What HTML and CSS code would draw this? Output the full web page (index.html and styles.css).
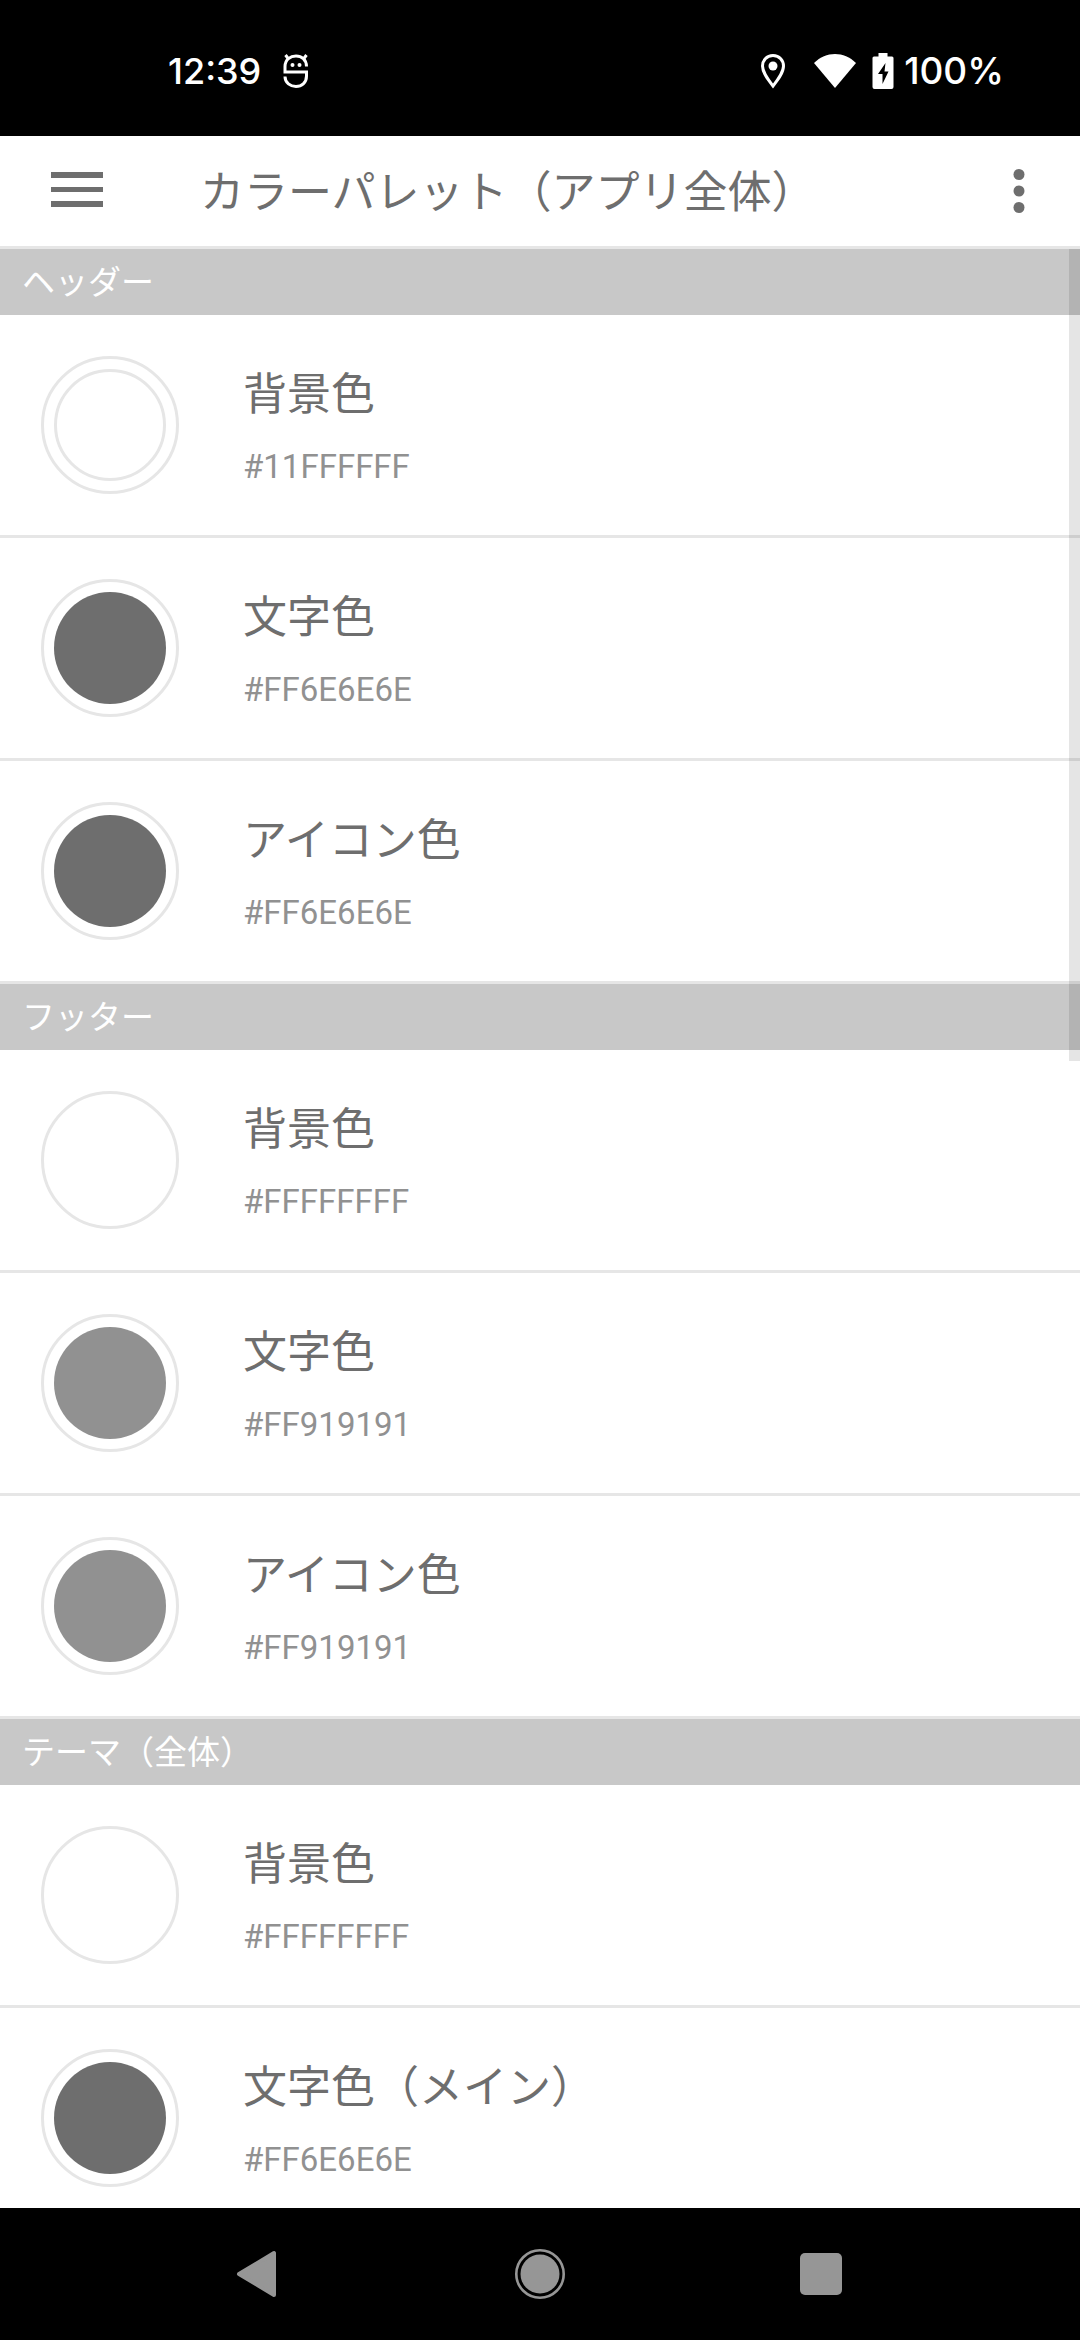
FILE: index.html
```html
<!DOCTYPE html>
<html lang="ja">
<head>
<meta charset="utf-8">
<meta name="viewport" content="width=device-width">
<title>カラーパレット（アプリ全体）</title>
<link rel="stylesheet" href="styles.css">
</head>
<body>
<div class="status-bar">
  <span class="clock">12:39</span>
  <svg class="status-app" width="26" height="36" viewBox="0 0 26 36" fill="none" stroke="#fff" stroke-width="3">
    <path d="M23.500 13.500C23.500 6.500 18.500 3 13 3S2 6.500 2 13.500V19H23.500V23C23.500 30 18.500 33.500 13 33.500S2 30 2 23.500"/>
    <path d="M5.500 6L2.500 2M20.500 6L23.500 2"/>
    <circle cx="9.500" cy="12" r="2" fill="#fff" stroke="none"/>
    <circle cx="16.500" cy="12" r="2" fill="#fff" stroke="none"/>
  </svg>
  <div class="status-right">
    <svg class="status-pin" width="26" height="36" viewBox="0 0 26 36">
      <path d="M13 2.500C6.500 2.500 2.500 7.500 2.500 13C2.500 19.500 8 26.500 13 33C18 26.500 23.500 19.500 23.500 13C23.500 7.500 19.500 2.500 13 2.500Z" fill="none" stroke="#fff" stroke-width="3"/>
      <circle cx="13" cy="13" r="4.500" fill="#fff"/>
    </svg>
    <svg class="status-wifi" width="42" height="36" viewBox="0 0 42 36">
      <path d="M0 10C12-2 30-2 42 10L21 35Z" fill="#fff"/>
    </svg>
    <svg class="status-battery" width="22" height="36" viewBox="0 0 22 36">
      <path d="M6.500 0H15.500V3.500H20Q21.500 3.500 21.500 5V34Q21.500 36 19.500 36H2.500Q.5 36 .5 34V5Q.5 3.500 2 3.500H6.500Z" fill="#fff"/>
      <path d="M13.500 10L6 21H10.500V31L16.500 18.500H12.500Z" fill="#000"/>
    </svg>
    <span class="charge">100%</span>
  </div>
</div>

<header class="toolbar">
  <button class="icon-button menu" type="button" aria-label="メニュー">
    <svg width="52" height="36" viewBox="0 0 52 36" fill="#6e6e6e"><path d="M0 0H52V6H0ZM0 15H52V20H0ZM0 29H52V35H0Z"/></svg>
  </button>
  <h1 class="title">カラーパレット（アプリ全体）</h1>
  <button class="icon-button more" type="button" aria-label="その他">
    <svg width="12" height="44" viewBox="0 0 12 44" fill="#6e6e6e"><circle cx="6" cy="5.500" r="5.500"/><circle cx="6" cy="22" r="5.500"/><circle cx="6" cy="38.500" r="5.500"/></svg>
  </button>
</header>

<div class="list-frame">
  <main class="list">
    <h2 class="section">ヘッダー</h2>
    <button class="row" type="button"><span class="swatch"><span class="fill clear"></span></span><span class="text"><span class="name">背景色</span><span class="code">#11FFFFFF</span></span></button>
    <button class="row" type="button"><span class="swatch"><span class="fill dark"></span></span><span class="text"><span class="name">文字色</span><span class="code">#FF6E6E6E</span></span></button>
    <button class="row" type="button"><span class="swatch"><span class="fill dark"></span></span><span class="text"><span class="name">アイコン色</span><span class="code">#FF6E6E6E</span></span></button>
    <h2 class="section">フッター</h2>
    <button class="row" type="button"><span class="swatch"><span class="fill white"></span></span><span class="text"><span class="name">背景色</span><span class="code">#FFFFFFFF</span></span></button>
    <button class="row" type="button"><span class="swatch"><span class="fill gray"></span></span><span class="text"><span class="name">文字色</span><span class="code">#FF919191</span></span></button>
    <button class="row" type="button"><span class="swatch"><span class="fill gray"></span></span><span class="text"><span class="name">アイコン色</span><span class="code">#FF919191</span></span></button>
    <h2 class="section">テーマ（全体）</h2>
    <button class="row" type="button"><span class="swatch"><span class="fill white"></span></span><span class="text"><span class="name">背景色</span><span class="code">#FFFFFFFF</span></span></button>
    <button class="row" type="button"><span class="swatch"><span class="fill dark"></span></span><span class="text"><span class="name">文字色（メイン）</span><span class="code">#FF6E6E6E</span></span></button>
  </main>
  <div class="scroll-thumb"></div>
</div>

<nav class="nav-bar">
  <button class="icon-button" type="button" aria-label="戻る">
    <svg width="46" height="52" viewBox="0 0 46 52"><path d="M3 26L38 5V47Z" fill="#969696" stroke="#969696" stroke-width="4" stroke-linejoin="round"/></svg>
  </button>
  <button class="icon-button" type="button" aria-label="ホーム">
    <svg width="52" height="52" viewBox="0 0 52 52"><circle cx="26" cy="26" r="19.500" fill="#969696"/><circle cx="26" cy="26" r="23.700" fill="none" stroke="#969696" stroke-width="2.600"/></svg>
  </button>
  <button class="icon-button" type="button" aria-label="履歴">
    <svg width="42" height="42" viewBox="0 0 42 42"><rect width="42" height="42" rx="5" fill="#969696"/></svg>
  </button>
</nav>
</body>
</html>
```
FILE: styles.css
```css
* {
  box-sizing: border-box;
}

body {
  display: flex;
  flex-direction: column;
  height: 100vh;
  margin: 0;
  background: #fff;
  color: #6e6e6e;
  font-family: Roboto, "Noto Sans CJK JP", sans-serif;
}

button {
  border: 0;
  background: none;
  padding: 0;
  color: inherit;
  font: inherit;
}

svg {
  display: block;
}

h1,
h2 {
  margin: 0;
  font-weight: 400;
}

.status-bar {
  flex: none;
  display: flex;
  align-items: center;
  height: 136px;
  padding: 6px 76px 0 168px;
  background: #000;
  color: #fff;
  font-family: Inter, sans-serif;
  font-size: 37px;
  font-weight: 500;
  line-height: 44px;
}

.clock {
  font-size: 36px;
}

.status-app {
  margin-left: 22px;
}

.status-right {
  display: flex;
  align-items: center;
  margin-left: auto;
}

.status-wifi {
  margin-left: 28px;
}

.status-battery {
  margin: 0 10px 0 16px;
}

.toolbar {
  flex: none;
  display: flex;
  align-items: center;
  height: 113px;
  border-bottom: 3px solid #e6e6e6;
}

.icon-button {
  display: flex;
  align-items: center;
  justify-content: center;
}

.menu {
  width: 154px;
  height: 108px;
  padding-bottom: 2px;
}

.more {
  width: 122px;
  height: 108px;
}

.title {
  flex: 1;
  padding: 4px 0 0 46px;
  font-size: 44px;
  line-height: 64px;
}

.list-frame {
  position: relative;
  flex: 1;
  min-height: 0;
}

.list {
  height: 100%;
  overflow-y: auto;
  scrollbar-width: none;
}

.scroll-thumb {
  position: absolute;
  top: 0;
  right: 0;
  width: 11px;
  height: 812px;
  background: rgba(0, 0, 0, 0.1);
}

.section {
  padding: 10px 22px 8px;
  background: #c8c8c8;
  color: #fff;
  font-size: 33px;
  line-height: 48px;
}

.row {
  display: flex;
  align-items: center;
  gap: 64px;
  width: 100%;
  height: 223px;
  padding: 0 41px;
  border-bottom: 3px solid #e6e6e6;
  text-align: left;
}

.swatch {
  display: flex;
  align-items: center;
  justify-content: center;
  width: 138px;
  height: 138px;
  border: 3px solid #e6e6e6;
  border-radius: 50%;
}

.fill {
  width: 112px;
  height: 112px;
  border-radius: 50%;
}

.clear {
  border: 3px solid #e6e6e6;
}

.white {
  background: #fff;
}

.dark {
  background: #6e6e6e;
}

.gray {
  background: #919191;
}

.text {
  display: flex;
  flex-direction: column;
  gap: 20px;
  padding-top: 4px;
}

.name {
  font-size: 44px;
  line-height: 60px;
}

.code {
  color: #919191;
  font-size: 33px;
  line-height: 44px;
}

.nav-bar {
  flex: none;
  display: grid;
  grid-template-columns: repeat(3, 26%);
  align-items: center;
  justify-content: center;
  height: 132px;
  background: #000;
}
```
